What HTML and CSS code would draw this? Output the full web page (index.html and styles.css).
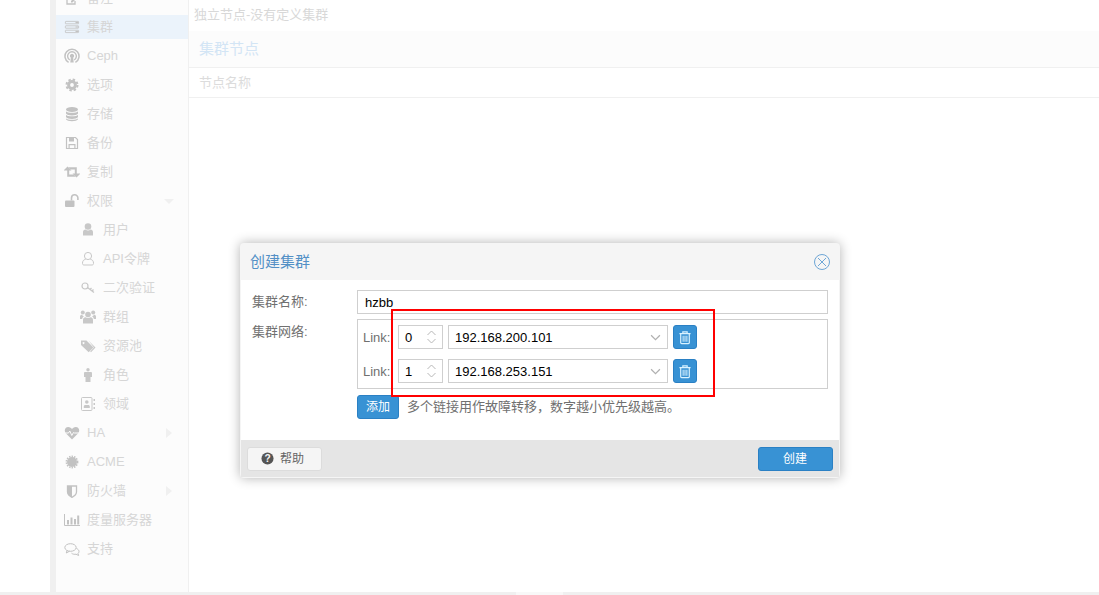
FILE: index.html
```html
<!DOCTYPE html>
<html lang="zh-CN">
<head>
<meta charset="utf-8">
<title>创建集群</title>
<link rel="stylesheet" href="styles.css">
</head>
<body>
<svg class="defs" xmlns="http://www.w3.org/2000/svg">
  <symbol id="i-edit" viewBox="0 0 16 16"><path d="M3 1h8v5M11 11v3H3V1" fill="none" stroke="currentColor" stroke-width="1.3"/><path d="M7 11l6-6 1.5 1.5-6 6H7z" fill="currentColor"/></symbol>
  <symbol id="i-server" viewBox="0 0 16 16"><g fill="none" stroke="currentColor" stroke-width=".8"><rect x="1.400" y="2.400" width="13.200" height="2.400" rx=".4"/><rect x="1.400" y="6.800" width="13.200" height="2.400" rx=".4"/><rect x="1.400" y="11.200" width="13.200" height="2.400" rx=".4"/></g><path d="M11.500 3h3v1.200h-3zM11.500 7.400h3v1.200h-3zM11.500 11.800h3v1.200h-3z" fill="currentColor"/></symbol>
  <symbol id="i-ceph" viewBox="0 0 16 16"><g fill="none" stroke="currentColor"><path d="M4.600 14.400A7 7 0 1 1 11.400 14.400" stroke-width="1.500"/><path d="M5.800 12A4.400 4.400 0 1 1 10.200 12" stroke-width="1.400"/></g><path d="M8 5.800a2.200 2.200 0 0 1 1.200 4l.5 4.600H6.300l.5-4.600A2.200 2.200 0 0 1 8 5.800z" fill="currentColor"/></symbol>
  <symbol id="i-gear" viewBox="0 0 16 16"><circle cx="8" cy="8" r="3.400" fill="none" stroke="currentColor" stroke-width="3"/><circle cx="8" cy="8" r="5.500" fill="none" stroke="currentColor" stroke-width="2" stroke-dasharray="2.400 1.920"/></symbol>
  <symbol id="i-db" viewBox="0 0 16 16"><g fill="currentColor"><ellipse cx="8" cy="3.500" rx="6" ry="2.500"/><path d="M2 5.200c1 2 11 2 12 0v2.300c-1 2.600-11 2.600-12 0zM2 8.800c1 2 11 2 12 0v2.200c-1 2.600-11 2.600-12 0zM2 12.300c1 2 11 2 12 0v1c-1 2.500-11 2.500-12 0z"/></g></symbol>
  <symbol id="i-save" viewBox="0 0 16 16"><path d="M2.500 2.500h9l2 2v9h-11z" fill="none" stroke="currentColor" stroke-width="1.200"/><path d="M5 3h5v3.500H5zM4.500 9h7v4h-1.200v-2.800H5.700V13H4.500z" fill="currentColor"/></symbol>
  <symbol id="i-retweet" viewBox="0 0 16 16"><g fill="currentColor"><path d="M3.500 2.500L7.500 6.500H5.200v4h4.600l1.900 2.300H3.200V6.500H-.5z"/><path d="M12.500 13.500L8.500 9.500h2.300v-4H6.200L4.300 3.200h8.500v6.300h3.700z"/></g></symbol>
  <symbol id="i-unlock" viewBox="0 0 16 16"><rect x="1" y="7.500" width="9.500" height="6.500" rx="1" fill="currentColor"/><path d="M7.500 7.500V5a3.200 3.200 0 0 1 6.400 0v2" fill="none" stroke="currentColor" stroke-width="1.600"/></symbol>
  <symbol id="i-user" viewBox="0 0 16 16"><g fill="currentColor"><circle cx="8" cy="4.500" r="3.300"/><path d="M3 13.500V10C3 8.500 4.200 7.500 5.500 7.500c1.500 1.200 3.500 1.200 5 0 1.300 0 2.500 1 2.500 2.500v3.500z"/></g></symbol>
  <symbol id="i-user-o" viewBox="0 0 16 16"><g fill="none" stroke="currentColor" stroke-width="1"><circle cx="8" cy="5" r="3.600"/><path d="M5.600 8.300C3.500 8.800 2.500 10 2.500 12v.5c0 1 .7 1.500 1.500 1.500h8c.8 0 1.500-.5 1.500-1.500V12c0-2-1-3.200-3.100-3.700"/></g></symbol>
  <symbol id="i-key" viewBox="0 0 16 16"><circle cx="5" cy="6" r="3" fill="none" stroke="currentColor" stroke-width="1.200"/><path d="M7.500 7.500l6.500 5M10 9.500l1.500-1.500M12 11l1.500-1.500" fill="none" stroke="currentColor" stroke-width="1.300"/></symbol>
  <symbol id="i-users" viewBox="0 0 16 16"><g fill="currentColor"><circle cx="8" cy="5.500" r="2.800"/><circle cx="2.800" cy="3.500" r="2"/><circle cx="13.200" cy="3.500" r="2"/><path d="M3 14.500v-3.500c0-1.700 1-2.700 2.400-2.700 1.500 1 3.700 1 5.200 0 1.400 0 2.400 1 2.400 2.700v3.500z"/><path d="M0 10V7.500C0 6.300 1 5.800 2 5.800c.5.800 1 1.200 2 1.500C3 8 2.200 9 2.200 10zM16 10V7.500c0-1.200-1-1.700-2-1.700-.5.800-1 1.200-2 1.500 1 .7 1.800 1.700 1.800 2.700z"/></g></symbol>
  <symbol id="i-tags" viewBox="0 0 16 16"><path d="M1 2.500h5.500l7 7-4.800 4.800-7.700-7.300zM3.500 4a1 1 0 1 0 .1 0z" fill="currentColor" fill-rule="evenodd"/><path d="M8.500 2.500l7 7-4.500 4.800-.8-.8 3.700-4z" fill="currentColor"/></symbol>
  <symbol id="i-male" viewBox="0 0 16 16"><g fill="currentColor"><circle cx="8" cy="2.800" r="1.700"/><path d="M5 5h6c.5 0 1 .5 1 1v4h-1.500v5h-5v-5H4V6c0-.5.500-1 1-1z"/></g></symbol>
  <symbol id="i-book" viewBox="0 0 16 16"><rect x="1.500" y="1.500" width="10.500" height="13" rx="1" fill="none" stroke="currentColor" stroke-width="1"/><g fill="currentColor"><circle cx="6.800" cy="6" r="1.800"/><path d="M3.800 12v-1.500c0-1 .8-1.500 1.500-1.500h3c.7 0 1.500.5 1.500 1.500V12zM13.500 3H15v2h-1.500zM13.500 7H15v2h-1.500zM13.500 11H15v2h-1.500z"/></g></symbol>
  <symbol id="i-heart" viewBox="0 0 16 16"><path d="M8 14.500L1.800 8.300C-.3 5.800 1 2 4.200 2 6 2 7.300 3 8 4.200 8.700 3 10 2 11.800 2c3.200 0 4.500 3.800 2.400 6.300z" fill="currentColor"/><path d="M0 8h4.500l1.300-2 2 4.500 1.700-3 1 .5H16" fill="none" stroke="#fcfcfc" stroke-width="1"/></symbol>
  <symbol id="i-cert" viewBox="0 0 16 16"><circle cx="8" cy="8" r="5" fill="currentColor"/><circle cx="8" cy="8" r="5.600" fill="none" stroke="currentColor" stroke-width="1.600" stroke-dasharray="1.400 1.130"/></symbol>
  <symbol id="i-shield" viewBox="0 0 16 16"><path d="M3.500 3h9v6c0 2.300-2.600 4.300-4.500 5.300C6.100 13.300 3.500 11.300 3.500 9z" fill="none" stroke="currentColor" stroke-width="1.300"/><path d="M3.500 3H8v11.300C6.100 13.300 3.500 11.300 3.500 9z" fill="currentColor"/></symbol>
  <symbol id="i-chart" viewBox="0 0 16 16"><path d="M.5 2v11.500H16" fill="none" stroke="currentColor" stroke-width="1"/><path d="M3 8h2v4.500H3zM6.500 5.500h2v7h-2zM10 7h2v5.500h-2zM13.200 3.500h2v9h-2z" fill="currentColor"/></symbol>
  <symbol id="i-comments" viewBox="0 0 16 16"><g fill="none" stroke="currentColor" stroke-width="1"><ellipse cx="6.500" cy="6.500" rx="5.700" ry="3.800"/><path d="M3 9.500L2.300 12 5.500 10.200M12.500 7.500c1.700.7 2.500 1.900 2.500 3 0 1-.6 1.600-1 2l.6 2-2.600-1.300c-1.300.3-3.200.1-4.500-1"/></g></symbol>
</svg>

<div class="app">
  <div class="workspace">
    <div class="gutter"></div>
    <div class="rail"></div>
    <nav class="nav">
      <ul class="menu">
        <li class="item"><svg class="ico"><use href="#i-edit"/></svg><span>备注</span></li>
        <li class="item active"><svg class="ico"><use href="#i-server"/></svg><span>集群</span></li>
        <li class="item"><svg class="ico"><use href="#i-ceph"/></svg><span>Ceph</span></li>
        <li class="item"><svg class="ico"><use href="#i-gear"/></svg><span>选项</span></li>
        <li class="item"><svg class="ico"><use href="#i-db"/></svg><span>存储</span></li>
        <li class="item"><svg class="ico"><use href="#i-save"/></svg><span>备份</span></li>
        <li class="item"><svg class="ico"><use href="#i-retweet"/></svg><span>复制</span></li>
        <li class="item"><svg class="ico"><use href="#i-unlock"/></svg><span>权限</span><i class="arrow-down"></i></li>
        <li class="item sub"><svg class="ico"><use href="#i-user"/></svg><span>用户</span></li>
        <li class="item sub"><svg class="ico"><use href="#i-user-o"/></svg><span>API令牌</span></li>
        <li class="item sub"><svg class="ico"><use href="#i-key"/></svg><span>二次验证</span></li>
        <li class="item sub"><svg class="ico"><use href="#i-users"/></svg><span>群组</span></li>
        <li class="item sub"><svg class="ico"><use href="#i-tags"/></svg><span>资源池</span></li>
        <li class="item sub"><svg class="ico"><use href="#i-male"/></svg><span>角色</span></li>
        <li class="item sub"><svg class="ico"><use href="#i-book"/></svg><span>领域</span></li>
        <li class="item"><svg class="ico"><use href="#i-heart"/></svg><span>HA</span><i class="arrow-right"></i></li>
        <li class="item"><svg class="ico"><use href="#i-cert"/></svg><span>ACME</span></li>
        <li class="item"><svg class="ico"><use href="#i-shield"/></svg><span>防火墙</span><i class="arrow-right"></i></li>
        <li class="item"><svg class="ico"><use href="#i-chart"/></svg><span>度量服务器</span></li>
        <li class="item"><svg class="ico"><use href="#i-comments"/></svg><span>支持</span></li>
      </ul>
    </nav>
    <main class="content">
      <div class="status">独立节点-没有定义集群</div>
      <div class="panel-head">集群节点</div>
      <div class="col-head">节点名称</div>
    </main>
  </div>
  <div class="bottom"><div class="bottom-tab"></div></div>
</div>

<section class="dialog">
  <header class="dialog-head">
    <span class="dialog-title">创建集群</span>
    <svg class="close" viewBox="0 0 18 18"><circle cx="9" cy="9" r="7.500" fill="none" stroke="currentColor" stroke-width="1"/><path d="M5 5l8 8M13 5l-8 8" fill="none" stroke="currentColor" stroke-width="1"/></svg>
  </header>
  <div class="dialog-body">
    <div class="row-name">
      <label class="field-label">集群名称:</label>
      <div class="box name-box">hzbb</div>
    </div>
    <div class="row-net">
      <label class="field-label">集群网络:</label>
      <div class="net-col">
        <div class="links">
          <div class="link">
            <span class="link-label">Link:</span>
            <div class="box spin"><span class="val">0</span><svg class="spin-ico" viewBox="0 0 10 16"><path d="M1 6l4-4 4 4M1 10l4 4 4-4" fill="none" stroke="currentColor" stroke-width="1"/></svg></div>
            <div class="box select"><span class="val">192.168.200.101</span><svg class="sel-ico" viewBox="0 0 10 6"><path d="M1 1l4 4 4-4" fill="none" stroke="currentColor" stroke-width="1.100"/></svg></div>
            <button class="btn-del"><svg class="trash" viewBox="0 0 14 16"><path d="M.5 3.500h13M4.500 3.500V1.500h5v2" fill="none" stroke="currentColor" stroke-width="1.400"/><path d="M2 3.500v10.700c0 .6.400 1 1 1h8c.6 0 1-.4 1-1V3.500" fill="none" stroke="currentColor" stroke-width="1.400"/><path d="M4.800 6v7M7 6v7M9.200 6v7" fill="none" stroke="currentColor" stroke-width="1.200"/></svg></button>
          </div>
          <div class="link">
            <span class="link-label">Link:</span>
            <div class="box spin"><span class="val">1</span><svg class="spin-ico" viewBox="0 0 10 16"><path d="M1 6l4-4 4 4M1 10l4 4 4-4" fill="none" stroke="currentColor" stroke-width="1"/></svg></div>
            <div class="box select"><span class="val">192.168.253.151</span><svg class="sel-ico" viewBox="0 0 10 6"><path d="M1 1l4 4 4-4" fill="none" stroke="currentColor" stroke-width="1.100"/></svg></div>
            <button class="btn-del"><svg class="trash" viewBox="0 0 14 16"><path d="M.5 3.500h13M4.500 3.500V1.500h5v2" fill="none" stroke="currentColor" stroke-width="1.400"/><path d="M2 3.500v10.700c0 .6.400 1 1 1h8c.6 0 1-.4 1-1V3.500" fill="none" stroke="currentColor" stroke-width="1.400"/><path d="M4.800 6v7M7 6v7M9.200 6v7" fill="none" stroke="currentColor" stroke-width="1.200"/></svg></button>
          </div>
        </div>
        <div class="add-row">
          <button class="btn-add">添加</button>
          <span class="hint">多个链接用作故障转移，数字越小优先级越高。</span>
        </div>
      </div>
    </div>
  </div>
  <footer class="dialog-foot">
    <button class="btn-help"><svg class="help-ico" viewBox="0 0 14 14"><circle cx="7" cy="7" r="6.500" fill="currentColor"/><text class="help-q" x="7" y="10.600" text-anchor="middle">?</text></svg><span>帮助</span></button>
    <button class="btn-create">创建</button>
  </footer>
</section>
<div class="annot"></div>
</body>
</html>
```
FILE: styles.css
```css
* { box-sizing: border-box; }
html, body { margin: 0; height: 595px; overflow: hidden; background: #fff; }
body {
  position: relative;
  font: 13px/16px "Liberation Sans", "Noto Sans CJK SC", sans-serif;
  color: #666;
}
.defs { display: none; }

.app { display: flex; flex-direction: column; height: 595px; }
.workspace { flex: 1; display: flex; min-height: 0; }
.gutter { width: 50px; }
.rail { width: 6px; background: #f0f0f0; }
.nav { width: 133px; background: #fcfcfc; border-right: 1px solid #f0f0f0; overflow: hidden; }
.menu { list-style: none; margin: -14px 0 0; padding: 0; display: flex; flex-direction: column; gap: 5px; }
.item { height: 24px; display: flex; align-items: center; padding-left: 8px; gap: 7px; color: #d6d6d6; position: relative; }
.item.active { background: #ebf3fb; }
.item.sub { padding-left: 24px; }
.ico { width: 16px; height: 16px; color: #c2c2c2; flex: none; }
.sub .ico { color: #c8c8c8; }
.arrow-down { width: 0; height: 0; border: 5px solid transparent; border-top: 5px solid #f0f0f0; border-bottom: 0; position: absolute; left: 108px; top: 10px; }
.arrow-right { width: 0; height: 0; border: 5px solid transparent; border-left: 6px solid #f0f0f0; border-right: 0; position: absolute; left: 110px; top: 7px; }

.content { flex: 1; display: flex; flex-direction: column; }
.status { height: 31px; padding: 7px 0 0 5px; color: #d8d8d8; }
.panel-head { height: 37px; padding: 9px 0 0 10px; font-size: 15px; line-height: 18px; background: #fcfcfc; color: #d3e5f5; border-bottom: 1px solid #f0f0f0; }
.col-head { height: 30px; padding: 7px 0 0 10px; color: #dcdcdc; border-bottom: 1px solid #f0f0f0; }

.bottom { height: 3px; background: #f0f0f0; padding-left: 516px; }
.bottom-tab { width: 47px; height: 3px; background: #f8f8f8; }

.dialog {
  position: absolute; left: 240px; top: 243px; width: 600px; height: 235px;
  background: #f5f5f5; border-radius: 4px;
  box-shadow: 0 0 12px rgba(0,0,0,.3);
  display: flex; flex-direction: column; padding: 0 1.500px 1px 1px;
}
.dialog-head { height: 37px; display: flex; align-items: center; justify-content: space-between; padding: 0 8px 0 9px; flex: none; }
.dialog-title { font-size: 15px; line-height: 18px; color: #5390c6; }
.close { width: 18px; height: 18px; color: #6ea6d6; }
.dialog-body { height: 160px; background: #fff; padding: 10px 10.500px 0 11px; flex: none; }
.row-name, .row-net { display: flex; }
.row-net { margin-top: 5px; }
.field-label { width: 105px; flex: none; color: #707070; line-height: 24px; }
.row-net .field-label { line-height: 26px; }
.box { border: 1px solid #cfcfcf; background: #fff; color: #000; height: 24px; line-height: 24px; }
.name-box { flex: 1; padding-left: 7px; }
.net-col { flex: 1; display: flex; flex-direction: column; }
.links { height: 70px; border: 1px solid #cfcfcf; padding: 5px 5px 0; display: flex; flex-direction: column; gap: 10px; }
.link { display: flex; align-items: center; height: 24px; }
.link-label { width: 35px; flex: none; color: #707070; line-height: 16px; padding-top: 2px; }
.val { line-height: 16px; padding-top: 2px; }
.spin { width: 45px; padding-left: 6px; display: flex; justify-content: space-between; align-items: center; flex: none; }
.spin-ico { width: 11px; height: 16px; color: #b8b8b8; margin-right: 5px; }
.select { width: 220px; margin-left: 5px; padding-left: 6px; display: flex; justify-content: space-between; align-items: center; flex: none; }
.sel-ico { width: 11px; height: 7px; color: #b0b0b0; margin-right: 6px; }
.btn-del { width: 24px; height: 24px; margin-left: 5px; padding: 0; border: 1px solid #2a80c4; border-radius: 3px; background: #3892d4; display: flex; align-items: center; justify-content: center; color: #d8f2ff; }
.trash { width: 12px; height: 15px; }
.add-row { display: flex; align-items: center; margin-top: 6px; gap: 8px; }
.btn-add { width: 42px; height: 24px; padding: 0; border: 1px solid #2a80c4; border-radius: 3px; background: #3892d4; color: #fff; font: 12px/22px "Liberation Sans", "Noto Sans CJK SC", sans-serif; }
.hint { color: #707070; white-space: nowrap; line-height: 18px; }

.dialog-foot { flex: 1; background: #e5e5e5; display: flex; justify-content: space-between; align-items: center; padding: 0 6px; }
.btn-help { width: 75px; height: 24px; padding: 0 0 0 13px; border: 1px solid #dcdcdc; border-radius: 3px; background: #f5f5f5; color: #666; font: 12px/22px "Liberation Sans", "Noto Sans CJK SC", sans-serif; display: flex; align-items: center; gap: 6px; }
.help-ico { width: 13px; height: 13px; color: #555; }
.help-q { font: bold 11px "Liberation Sans", sans-serif; fill: #f5f5f5; }
.btn-create { width: 75px; height: 24px; padding: 0; border: 1px solid #2a80c4; border-radius: 3px; background: #3892d4; color: #fff; font: 12px/22px "Liberation Sans", "Noto Sans CJK SC", sans-serif; }

.annot { position: absolute; left: 391px; top: 309px; width: 324px; height: 88px; border: 2px solid #f00; }
```
